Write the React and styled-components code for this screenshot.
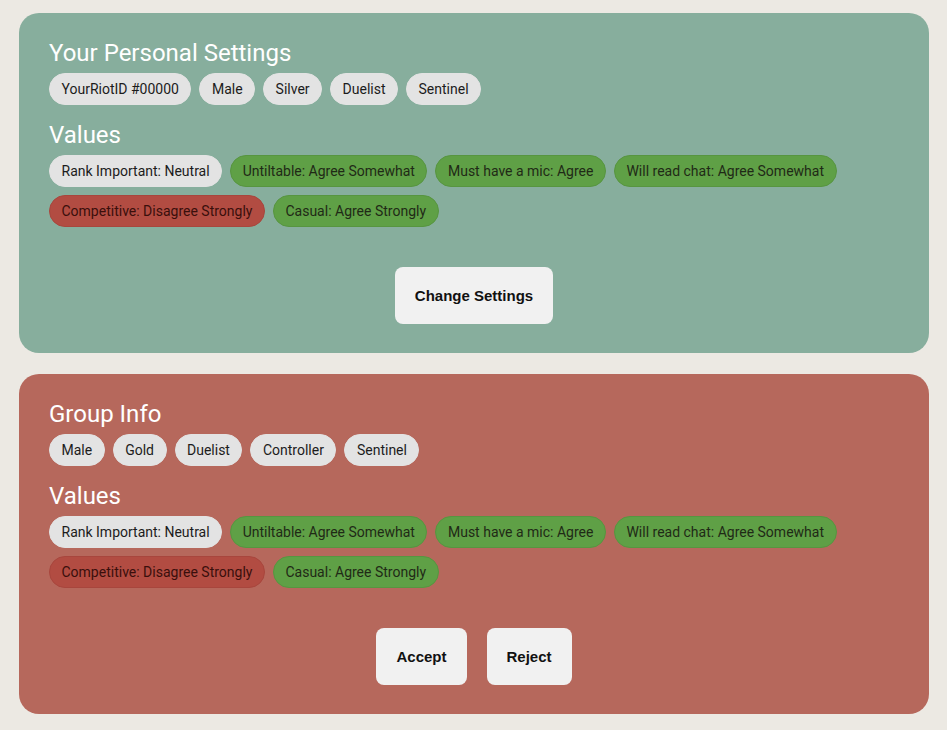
import React from "react";
import styled, { createGlobalStyle } from "styled-components";

const GlobalStyle = createGlobalStyle`
    body {
        margin: 0;
        background: #ece9e3;
        font-family: Roboto, "Liberation Sans", sans-serif;
    }
`;

const Page = styled.div`
    display: flex;
    flex-direction: column;
    gap: 21px;
    padding: 13px 18px 16px 19px;
`;

const Card = styled.section`
    display: flex;
    flex-direction: column;
    height: 340px;
    box-sizing: border-box;
    padding: 23px 30px 29px;
    border-radius: 20px;
    background: ${(p) => (p.tone === "red" ? "#b6685c" : "#87ae9d")};
`;

const Title = styled.h2`
    margin: 3px 0 6px;
    font-size: 24px;
    line-height: 28px;
    font-weight: 400;
    color: #ffffff;
`;

const SubTitle = styled(Title)`
    margin: 16px 0 6px;
`;

const ChipRow = styled.div`
    display: flex;
    flex-wrap: wrap;
    gap: 8px;
`;

const chipColors = {
    neutral: { bg: "#e3e3e3", border: "#e3e3e3", text: "#1c1c1c" },
    agree: { bg: "#5fa046", border: "#579540", text: "#1f2a16" },
    disagree: { bg: "#b24c42", border: "#a8463d", text: "#3a0f0c" },
};

const Chip = styled.span`
    display: inline-flex;
    align-items: center;
    height: 32px;
    box-sizing: border-box;
    padding: 0 11.5px;
    border-radius: 16px;
    border: 1px solid ${(p) => chipColors[p.kind || "neutral"].border};
    background: ${(p) => chipColors[p.kind || "neutral"].bg};
    color: ${(p) => chipColors[p.kind || "neutral"].text};
    font-size: 14px;
    white-space: nowrap;
`;

const Actions = styled.div`
    display: flex;
    justify-content: center;
    gap: 20px;
    margin-top: auto;
`;

const Button = styled.button`
    height: 57px;
    padding: 0 20px;
    border: none;
    border-radius: 8px;
    background: #f1f1f1;
    color: #111;
    font-family: "Liberation Sans", Arial, sans-serif;
    font-weight: 700;
    font-size: 15px;
    cursor: pointer;
`;

const values = [
    { label: "Rank Important: Neutral", kind: "neutral" },
    { label: "Untiltable: Agree Somewhat", kind: "agree" },
    { label: "Must have a mic: Agree", kind: "agree" },
    { label: "Will read chat: Agree Somewhat", kind: "agree" },
    { label: "Competitive: Disagree Strongly", kind: "disagree" },
    { label: "Casual: Agree Strongly", kind: "agree" },
];

const Values = () => (
    <>
        <SubTitle>{"Values"}</SubTitle>
        <ChipRow>
            {values.map((v) => (
                <Chip key={v.label} kind={v.kind}>
                    {v.label}
                </Chip>
            ))}
        </ChipRow>
    </>
);

const App = () => (
    <Page>
        <GlobalStyle />
        <Card>
            <Title>{"Your Personal Settings"}</Title>
            <ChipRow>
                {["YourRiotID #00000", "Male", "Silver", "Duelist", "Sentinel"].map((t) => (
                    <Chip key={t}>{t}</Chip>
                ))}
            </ChipRow>
            <Values />
            <Actions>
                <Button>{"Change Settings"}</Button>
            </Actions>
        </Card>
        <Card tone="red">
            <Title>{"Group Info"}</Title>
            <ChipRow>
                {["Male", "Gold", "Duelist", "Controller", "Sentinel"].map((t) => (
                    <Chip key={t}>{t}</Chip>
                ))}
            </ChipRow>
            <Values />
            <Actions>
                <Button>{"Accept"}</Button>
                <Button>{"Reject"}</Button>
            </Actions>
        </Card>
    </Page>
);

export default App;
